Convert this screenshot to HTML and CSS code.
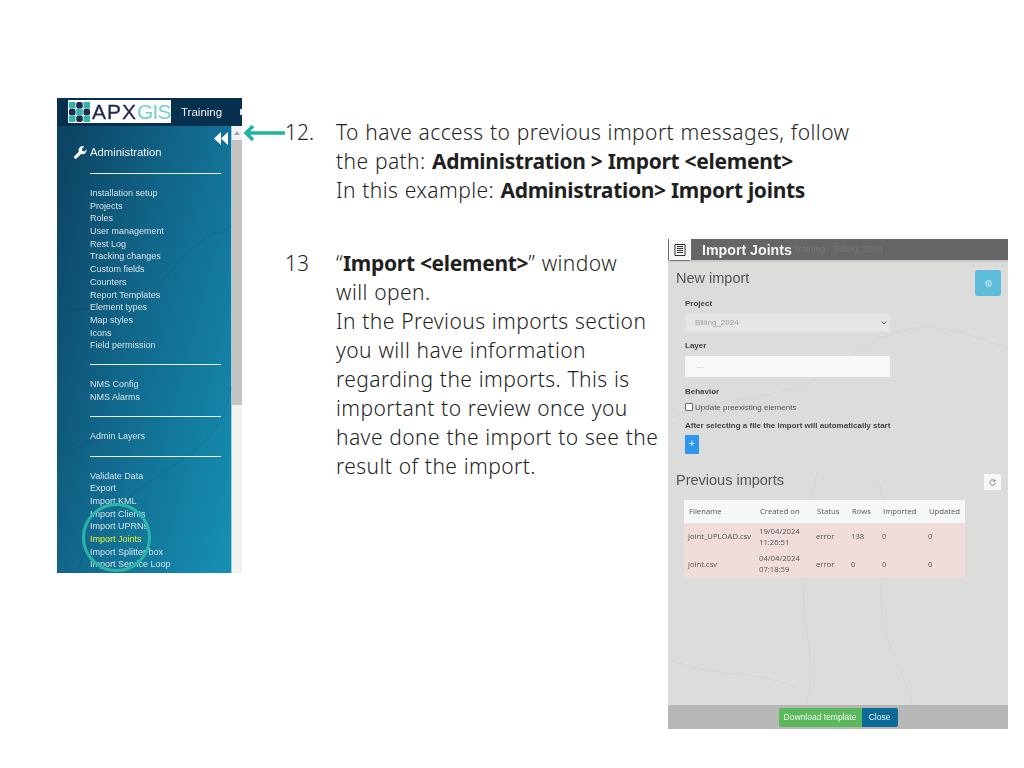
FILE: index.html
```html
<!DOCTYPE html>
<html lang="en">
<head>
    <meta charset="UTF-8">
    <meta name="viewport" content="width=device-width, initial-scale=1.0">
    <title>Import messages</title>
    <link rel="stylesheet" href="styles.css">
</head>
<body>
<div class="slide">
    <div class="sidebar-shot">
        <div class="topbar">
            <div class="logo">
                <svg class="logo-mark" width="21" height="20" viewBox="0 0 21 20">
                    <rect x="0" y="0" width="6.500" height="6.500" fill="#35b5a8"/>
                    <rect x="14.500" y="0" width="6.500" height="6.500" fill="#35b5a8"/>
                    <rect x="7.250" y="6.750" width="6.500" height="6.500" fill="#35b5a8"/>
                    <rect x="0" y="13.500" width="6.500" height="6.500" fill="#35b5a8"/>
                    <rect x="14.500" y="13.500" width="6.500" height="6.500" fill="#35b5a8"/>
                    <rect x="7.250" y="0" width="6.500" height="6.500" rx="2" fill="#1d2a52"/>
                    <rect x="0" y="6.750" width="6.500" height="6.500" rx="2" fill="#1d2a52"/>
                    <rect x="14.500" y="6.750" width="6.500" height="6.500" rx="2" fill="#1d2a52"/>
                    <rect x="7.250" y="13.500" width="6.500" height="6.500" rx="2" fill="#1d2a52"/>
                </svg>
                <span class="logo-apx">APX</span><span class="logo-gis">GIS</span>
            </div>
            <span class="env">Training</span>
            <span class="env-next"></span>
        </div>
        <div class="side-body">
            <div class="menu">
                <svg class="map-lines" width="175" height="447" viewBox="0 0 175 447">
                    <path d="M0 190 C40 170 70 200 110 150 S160 110 175 100" />
                    <path d="M20 447 C40 380 90 360 130 330 S165 290 175 260" />
                    <path d="M0 330 C30 320 50 300 80 310" />
                </svg>
                <div class="collapse">
                    <svg width="14" height="13" viewBox="0 0 14 13"><path d="M7 0v13L0 6.500zM14 0v13L7 6.500z" fill="#fff"/></svg>
                </div>
                <div class="admin-title">
                    <svg width="13" height="13" viewBox="0 0 13 13"><path d="M12.700 3.100 10.300 5.400 8.400 4.900 7.900 3 10.200.6C8.500 0 6.600.4 5.600 1.600 4.500 2.800 4.300 4.300 4.800 5.700L.5 10c-.7.700-.7 1.700 0 2.300.7.700 1.700.700 2.300 0l4.300-4.300c1.500.5 3.100.2 4.300-1 1.100-1.100 1.500-2.900.8-3.900z" fill="#fff"/></svg>
                    <span>Administration</span>
                </div>
                <div class="menu-group first">
                    <a>Installation setup</a>
                    <a>Projects</a>
                    <a>Roles</a>
                    <a>User management</a>
                    <a>Rest Log</a>
                    <a>Tracking changes</a>
                    <a>Custom fields</a>
                    <a>Counters</a>
                    <a>Report Templates</a>
                    <a>Element types</a>
                    <a>Map styles</a>
                    <a>Icons</a>
                    <a>Field permission</a>
                </div>
                <div class="menu-group">
                    <a>NMS Config</a>
                    <a>NMS Alarms</a>
                </div>
                <div class="menu-group">
                    <a>Admin Layers</a>
                </div>
                <div class="menu-group">
                    <a>Validate Data</a>
                    <a>Export</a>
                    <a>Import KML</a>
                    <a>Import Clients</a>
                    <a>Import UPRNs</a>
                    <a class="active">Import Joints</a>
                    <a>Import Splitter box</a>
                    <a>Import Service Loop</a>
                </div>
            </div>
            <div class="scrollbar">
                <div class="scroll-btn">
                    <svg width="6" height="4" viewBox="0 0 6 4"><path d="M3 0l3 4H0z" fill="#a5a5a5"/></svg>
                </div>
                <div class="scroll-thumb"></div>
            </div>
        </div>
        <div class="ring"></div>
    </div>

    <div class="notes">
        <div class="note note-first">
            <svg class="arrow" width="44" height="20" viewBox="0 0 44 20"><path d="M43 10H4M11 3 4 10l7 7" fill="none" stroke="#1fb3a5" stroke-width="3.500"/></svg>
            <span class="num">12.</span>
            <p>To have access to previous import messages, follow<br>
            the path: <b>Administration &gt; Import &lt;element&gt;</b><br>
            In this example: <b>Administration&gt; Import joints</b></p>
        </div>
        <div class="note-row">
            <div class="note note-second">
                <span class="num">13</span>
                <p>“<b>Import &lt;element&gt;</b>” window<br>
                will open.<br>
                In the Previous imports section<br>
                you will have information<br>
                regarding the imports. This is<br>
                important to review once you<br>
                have done the import to see the<br>
                result of the import.</p>
            </div>
            <div class="window">
                <svg class="win-map" width="340" height="490" viewBox="0 0 340 490">
                    <path d="M150 230C135 290 130 330 140 400S130 470 120 490" />
                    <path d="M0 180C60 150 120 170 180 120S290 90 340 110" />
                    <path d="M210 240C230 300 200 340 220 400S250 450 240 490" />
                    <path d="M0 420C50 440 90 430 130 450" />
                </svg>
                <div class="win-head">
                    <div class="win-icon">
                        <svg width="12" height="12" viewBox="0 0 12 12"><path d="M1 .5h10v11H1z" fill="none" stroke="#333" stroke-width="1"/><path d="M3 2.500h6M3 4.500h6M3 6.500h6M3 8.500h6" stroke="#333" stroke-width="1.100"/></svg>
                    </div>
                    <span class="win-title">Import Joints</span>
                    <span class="ghost-a">Training</span>
                    <span class="ghost-b">Billing_2024</span>
                </div>
                <div class="win-body">
                    <div class="section-head">
                        <h2 class="new-title">New import</h2>
                        <div class="info-btn"><svg width="7" height="7" viewBox="0 0 7 7"><circle cx="3.500" cy="3.500" r="2.800" fill="none" stroke="#e8f6fa"/><path d="M3.500 2v3" stroke="#e8f6fa"/></svg></div>
                    </div>
                    <div class="import-form">
                        <label class="field-label">Project</label>
                        <div class="select-box">
                            <span>Billing_2024</span>
                            <svg width="6" height="4" viewBox="0 0 6 4"><path d="M.5.500 3 3 5.500.500" fill="none" stroke="#666"/></svg>
                        </div>
                        <label class="field-label">Layer</label>
                        <div class="input-box">---</div>
                        <label class="field-label">Behavior</label>
                        <div class="check-row"><span class="check"></span><span>Update preexisting elements</span></div>
                        <div class="field-label auto-note">After selecting a file the import will automatically start</div>
                        <div class="plus-btn">+</div>
                    </div>
                    <div class="section-head prev-head">
                        <h2>Previous imports</h2>
                        <div class="refresh-btn"><svg width="7" height="7" viewBox="0 0 7 7"><path d="M5.800 2A2.700 2.700 0 1 0 6.200 4M6 .5V2.300H4.300" fill="none" stroke="#666" stroke-width=".8"/></svg></div>
                    </div>
                    <table class="imports">
                        <thead>
                            <tr><th class="c-file">Filename</th><th class="c-date">Created on</th><th class="c-status">Status</th><th class="c-rows">Rows</th><th class="c-imp">Imported</th><th>Updated</th></tr>
                        </thead>
                        <tbody>
                            <tr><td>joint_UPLOAD.csv</td><td>19/04/2024<br>11:26:51</td><td>error</td><td>138</td><td>0</td><td>0</td></tr>
                            <tr><td>joint.csv</td><td>04/04/2024<br>07:18:59</td><td>error</td><td>0</td><td>0</td><td>0</td></tr>
                        </tbody>
                    </table>
                </div>
                <div class="win-foot">
                    <button class="btn-green">Download template</button><button class="btn-blue">Close</button>
                </div>
            </div>
        </div>
    </div>
</div>
</body>
</html>
```

FILE: styles.css
```css
html, body {
    margin: 0;
    background: #fff;
}
.slide {
    display: flex;
    width: 1024px;
    height: 768px;
    box-sizing: border-box;
    padding: 98px 0 0 57px;
    overflow: hidden;
}

/* left screenshot */
.sidebar-shot {
    position: relative;
    flex: none;
    width: 185px;
    height: 475px;
    overflow: hidden;
    font-family: "Liberation Sans", Arial, sans-serif;
    filter: blur(.35px);
}
.topbar {
    display: flex;
    align-items: center;
    height: 28px;
    padding: 2px 0 3px 11px;
    box-sizing: border-box;
    background: #06304d;
}
.logo {
    display: flex;
    align-items: center;
    width: 103px;
    height: 23px;
    box-sizing: border-box;
    padding-left: 1px;
    background: #fff;
    font-size: 21px;
    line-height: 23px;
}
.logo-mark {
    margin-right: 2px;
}
.logo-apx {
    color: #1d2a52;
    letter-spacing: 1px;
    -webkit-text-stroke: .3px #1d2a52;
}
.logo-gis {
    color: #76d0c8;
    letter-spacing: -.8px;
}
.env {
    margin-left: 10px;
    color: #eef3f5;
    font-size: 11.500px;
}
.env-next {
    width: 2px;
    height: 6px;
    margin-left: auto;
    background: #dfe7ea;
}
.side-body {
    display: flex;
    height: 447px;
}
.menu {
    position: relative;
    flex: none;
    width: 175px;
    box-sizing: border-box;
    background: linear-gradient(105deg, #0c4160 0%, #11688c 45%, #1590b4 100%);
    border-right: 1px solid #9fd0dc;
}
.map-lines {
    position: absolute;
    left: 0;
    top: 0;
}
.map-lines path {
    fill: none;
    stroke: rgba(0, 30, 50, .1);
}
.collapse {
    display: flex;
    align-items: flex-start;
    justify-content: flex-end;
    height: 11px;
    padding: 6px 3px 0 0;
}
.admin-title {
    display: flex;
    align-items: center;
    gap: 3px;
    height: 18px;
    margin-left: 17px;
    color: #f2f6f8;
    font-size: 11.300px;
}
.menu-group {
    position: relative;
    margin: 0 10px 0 33px;
    padding: 13px 0 12.500px;
    border-top: 1px solid #e8f1f4;
}
.menu-group.first {
    margin-top: 12px;
}
.menu-group a {
    display: block;
    height: 12.700px;
    color: #d5e3e8;
    font-size: 9px;
    line-height: 12.700px;
    white-space: nowrap;
}
.menu-group a.active {
    color: #e8f02a;
}
.scrollbar {
    flex: none;
    width: 10px;
    background: #f2f2f0;
}
.scroll-btn {
    display: flex;
    justify-content: center;
    height: 14px;
    padding-top: 5px;
    box-sizing: border-box;
    background: #f1f1f1;
}
.scroll-thumb {
    height: 265px;
    background: #c3c3c1;
}
.ring {
    position: absolute;
    left: 25px;
    top: 405px;
    width: 69px;
    height: 69px;
    box-sizing: border-box;
    border: 3.500px solid #2bb5a8;
    border-radius: 50%;
}

/* slide text */
.notes {
    flex: 1;
    margin-left: 43px;
    min-width: 0;
    color: #1f1f1f;
    font-family: "Noto Sans", sans-serif;
    font-weight: 300;
    font-size: 21px;
    line-height: 29px;
}
.note {
    display: flex;
}
.note b {
    font-weight: 700;
    letter-spacing: -.3px;
    word-spacing: 0;
}
.note p {
    margin: 0;
    white-space: nowrap;
    letter-spacing: .42px;
    word-spacing: .5px;
}
.num {
    flex: none;
    width: 51px;
}
.note-first {
    position: relative;
    margin-top: 20px;
}
.arrow {
    position: absolute;
    left: -43px;
    top: 5px;
}
.note-row {
    display: flex;
    justify-content: space-between;
    margin-top: 34px;
}
.note-second {
    margin-top: 10px;
}

/* right screenshot */
.window {
    position: relative;
    flex: none;
    display: flex;
    flex-direction: column;
    width: 340px;
    height: 490px;
    margin-right: 16px;
    background: #dcdcda;
    font-family: "Liberation Sans", Arial, sans-serif;
    font-weight: 400;
    color: #444;
    line-height: normal;
    filter: blur(.35px);
}
.win-map {
    position: absolute;
    left: 0;
    top: 0;
}
.win-map path {
    fill: none;
    stroke: rgba(150, 120, 110, .07);
}
.win-head {
    position: relative;
    flex: none;
    display: flex;
    align-items: center;
    height: 21px;
    background: #656668;
    border-bottom: 2px solid #c9c9c8;
}
.win-icon {
    display: flex;
    align-items: center;
    justify-content: center;
    flex: none;
    width: 22px;
    height: 22px;
    margin: 1px 0 0 1px;
    box-sizing: border-box;
    background: #f4f4f4;
    border: 1px solid #fff;
    border-bottom-color: #777;
}
.win-title {
    margin-left: 11px;
    color: #f4f4f4;
    font-size: 14.200px;
    font-weight: 700;
}
.ghost-a, .ghost-b {
    position: absolute;
    top: 5px;
    color: #767779;
    font-size: 9px;
}
.ghost-a {
    left: 125px;
}
.ghost-b {
    left: 166px;
}
.win-body {
    position: relative;
    flex: 1;
    padding: 8px 7px 0 8px;
    min-height: 0;
}
.section-head {
    display: flex;
    align-items: flex-start;
    justify-content: space-between;
}
.section-head h2 {
    margin: 0;
    color: #555;
    font-size: 14.500px;
    font-weight: 400;
    line-height: 20px;
}
.section-head h2.new-title {
    margin-top: -2px;
}
.info-btn {
    display: flex;
    align-items: center;
    justify-content: center;
    width: 26px;
    height: 26px;
    border-radius: 3px;
    background: #5cbcd9;
}
.import-form {
    margin: 3px 0 0 9px;
    width: 205px;
}
.field-label {
    display: block;
    color: #444;
    font-size: 8px;
    font-weight: 700;
    line-height: 10px;
}
.select-box {
    display: flex;
    align-items: center;
    justify-content: space-between;
    height: 19px;
    margin: 4px 0 9px;
    padding: 0 2px 0 9px;
    box-sizing: border-box;
    background: #e6e6e4;
    border: 1px solid #e0e0de;
    color: #a0a0a0;
    font-size: 8px;
}
.input-box {
    height: 21px;
    margin: 5px 0 10px;
    padding-left: 12px;
    background: #f8f8f7;
    color: #bbb;
    font-size: 7px;
    line-height: 21px;
}
.check-row {
    display: flex;
    align-items: center;
    gap: 2px;
    height: 12px;
    margin-top: 4px;
    color: #555;
    font-size: 8px;
}
.check {
    width: 6px;
    height: 6px;
    background: #fff;
    border: 1px solid #666;
    border-radius: 1px;
}
.auto-note {
    margin-top: 8px;
    white-space: nowrap;
}
.plus-btn {
    width: 14px;
    height: 19px;
    margin-top: 4px;
    border-radius: 1px;
    background: #2d96ee;
    color: #e6f2fd;
    font-size: 10px;
    line-height: 18px;
    text-align: center;
}
.prev-head {
    margin-top: 16px;
}
.refresh-btn {
    display: flex;
    align-items: center;
    justify-content: center;
    width: 17px;
    height: 16px;
    margin-top: 4px;
    border-radius: 1px;
    background: #f7f7f7;
}
.imports {
    width: 281px;
    margin: 10px 0 0 8px;
    border-collapse: collapse;
    table-layout: fixed;
    font-family: "Open Sans", sans-serif;
    font-size: 7.700px;
    line-height: 11px;
    color: #555;
}
.imports th {
    height: 23px;
    padding: 0 0 0 5px;
    background: #f6f7f7;
    font-weight: 400;
    text-align: left;
    white-space: nowrap;
}
.imports td {
    height: 27.500px;
    padding: 0 0 0 4px;
    background: #efdcdb;
    white-space: nowrap;
}
.c-file {
    width: 66px;
}
.c-date {
    width: 52px;
}
.c-status {
    width: 30px;
}
.c-rows {
    width: 26px;
}
.c-imp {
    width: 41px;
}
.win-foot {
    position: relative;
    flex: none;
    display: flex;
    align-items: center;
    justify-content: center;
    height: 24px;
    background: #b7b7b6;
}
.win-foot button {
    height: 19px;
    padding: 0;
    border: 0;
    color: #eef6ee;
    font-family: "Liberation Sans", Arial, sans-serif;
    font-size: 8.500px;
}
.btn-green {
    width: 83px;
    background: #5cb85c;
    border-radius: 2px 0 0 2px;
}
.btn-blue {
    width: 36px;
    background: #0b6a96;
    border-radius: 0 2px 2px 0;
}
```
